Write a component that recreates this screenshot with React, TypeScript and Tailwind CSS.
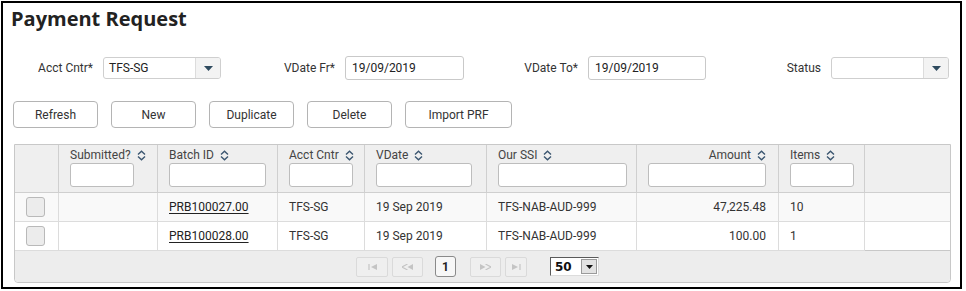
import React from "react";

const font = "[font-family:Roboto,'Liberation_Sans',sans-serif]";

const cols = [
  { key: "sub", label: "Submitted?", input: "w-[64px]" },
  { key: "batch", label: "Batch ID", input: "w-[97px]" },
  { key: "acct", label: "Acct Cntr", input: "w-[64px]" },
  { key: "vdate", label: "VDate", input: "w-[96px]" },
  { key: "ssi", label: "Our SSI", input: "w-[129px]" },
  { key: "amt", label: "Amount", input: "w-[118px]", right: true },
  { key: "items", label: "Items", input: "w-[64px]" },
];

const rows = [
  { batch: "PRB100027.00", acct: "TFS-SG", vdate: "19 Sep 2019", ssi: "TFS-NAB-AUD-999", amt: "47,225.48", items: "10" },
  { batch: "PRB100028.00", acct: "TFS-SG", vdate: "19 Sep 2019", ssi: "TFS-NAB-AUD-999", amt: "100.00", items: "1" },
];

const gridCols = "grid-cols-[44px_99px_120px_87px_122px_150px_142px_86px_85px]";

function SortIcon() {
  return (
    <svg width="9" height="11" viewBox="0 0 9 11" className="ml-[6px] shrink-0">
      <path d="M1 4.5 L4.5 1.2 L8 4.5" fill="none" stroke="#3b5670" strokeWidth="1.4" />
      <path d="M1 6.5 L4.5 9.8 L8 6.5" fill="none" stroke="#3b5670" strokeWidth="1.4" />
    </svg>
  );
}

function Caret() {
  return (
    <svg width="9" height="5" viewBox="0 0 9 5">
      <path d="M0 0 H9 L4.5 5 Z" fill="#2e4a5e" />
    </svg>
  );
}

function Select({ value }: { value?: string }) {
  return (
    <div className="ml-[10px] flex h-[22px] w-[118px] overflow-hidden rounded-[3px] border border-[#cfcfcf] bg-white">
      <div className="flex flex-1 items-center pl-[5px] text-[12px] text-[#222]">{value}</div>
      <div className="flex w-[25px] items-center justify-center border-l border-[#dcdcdc] bg-[#f3f3f3]">
        <Caret />
      </div>
    </div>
  );
}

function DateInput({ value, w }: { value: string; w: string }) {
  return (
    <div className={`ml-[10px] flex h-[24px] ${w} items-center rounded-[3px] border border-[#c9c9c9] bg-white pl-[6px] text-[12px] text-[#222]`}>
      {value}
    </div>
  );
}

function PagerBtn({ w, children }: { w: string; children: React.ReactNode }) {
  return (
    <div className={`flex h-[20px] ${w} items-center justify-center rounded-[2px] border border-[#dadada] bg-[#efefef]`}>
      {children}
    </div>
  );
}

export default function App() {
  return (
    <div className={`h-[291px] w-[966px] bg-white pl-px pt-px text-[#333] ${font}`}>
      <div className="h-[288px] w-[961px] border-2 border-black">
        <h1 className="pl-[8px] pt-[4px] text-[20px] font-bold leading-[24px] text-[#222] [font-family:'Open_Sans',Roboto,sans-serif]">
          Payment Request
        </h1>

        {/* filters */}
        <div className="mt-[25px] flex h-[24px] items-center pl-[10px] text-[12px]">
          <span className="w-[80px] text-right">Acct Cntr*</span>
          <Select value="TFS-SG" />
          <span className="w-[114px] text-right">VDate Fr*</span>
          <DateInput value="19/09/2019" w="w-[119px]" />
          <span className="w-[114px] text-right">VDate To*</span>
          <DateInput value="19/09/2019" w="w-[118px]" />
          <span className="w-[115px] text-right">Status</span>
          <Select />
        </div>

        {/* actions */}
        <div className="mt-[21px] flex gap-[13px] pl-[10px]">
          {["Refresh", "New", "Duplicate", "Delete", "Import PRF"].map((b) => (
            <button
              key={b}
              className={`h-[27px] ${b === "Import PRF" ? "w-[107px]" : "w-[85px]"} rounded-[4px] border border-[#b4b4b4] bg-white text-[12px] text-[#333]`}
            >
              {b}
            </button>
          ))}
        </div>

        {/* grid */}
        <div className="ml-[11px] mt-[16px] w-[937px] rounded-b-[4px] border border-[#c8c8c8] text-[12px]">
          <div className={`grid ${gridCols} bg-[#efefef]`}>
            <div className="h-[48px] border-b border-r border-[#cfcfcf]" />
            {cols.map((c) => (
              <div
                key={c.key}
                className={`flex h-[48px] flex-col border-b border-r border-[#cfcfcf] pt-[3px] ${c.right ? "items-end pr-[12px]" : "items-start pl-[11px]"}`}
              >
                <div className="flex h-[14px] items-center leading-[14px] text-[#444]">
                  {c.label}
                  <SortIcon />
                </div>
                <div className={`mt-[1px] h-[24px] ${c.input} rounded-[3px] border border-[#bdbdbd] bg-white`} />
              </div>
            ))}
            <div className="h-[48px] border-b border-[#cfcfcf]" />
          </div>

          {rows.map((r, i) => (
            <div key={r.batch} className={`grid ${gridCols} ${i === 0 ? "bg-[#f9f9f9]" : "bg-white"}`}>
              <div className="flex h-[29px] items-center border-b border-r border-[#dcdcdc] pl-[11px]">
                <div className="h-[20px] w-[19px] rounded-[3px] border border-[#b9b9b9] bg-[#ececec]" />
              </div>
              <div className="h-[29px] border-b border-r border-[#dcdcdc]" />
              <div className="flex h-[29px] items-center border-b border-r border-[#dcdcdc] pl-[11px]">
                <a className="text-[#222] underline underline-offset-2">{r.batch}</a>
              </div>
              <div className="flex h-[29px] items-center border-b border-r border-[#dcdcdc] pl-[11px]">{r.acct}</div>
              <div className="flex h-[29px] items-center border-b border-r border-[#dcdcdc] pl-[11px]">{r.vdate}</div>
              <div className="flex h-[29px] items-center border-b border-r border-[#dcdcdc] pl-[11px]">{r.ssi}</div>
              <div className="flex h-[29px] items-center justify-end border-b border-r border-[#dcdcdc] pr-[12px]">{r.amt}</div>
              <div className="flex h-[29px] items-center border-b border-r border-[#dcdcdc] pl-[11px]">{r.items}</div>
              <div className={`h-[29px] ${i === 0 ? "border-b border-[#dcdcdc]" : "border-b border-[#c8c8c8]"}`} />
            </div>
          ))}

          {/* pager */}
          <div className="flex h-[31px] items-center rounded-b-[4px] bg-[#ededed] pl-[341px]">
            <PagerBtn w="w-[32px]">
              <svg width="9" height="6" viewBox="0 0 9 6"><path d="M1 0 V6" stroke="#c4c4c4" strokeWidth="1.2" /><path d="M9 0 V6 L3 3 Z" fill="#c4c4c4" /></svg>
            </PagerBtn>
            <div className="ml-[4px]">
              <PagerBtn w="w-[31px]">
                <svg width="11" height="6" viewBox="0 0 11 6"><path d="M5.5 0 L0 3 L5.5 6" fill="none" stroke="#c4c4c4" strokeWidth="1.1" /><path d="M11 0 V6 L5.5 3 Z" fill="#c4c4c4" /></svg>
              </PagerBtn>
            </div>
            <div className="ml-[12px] flex h-[21px] w-[21px] items-center justify-center rounded-[3px] border border-[#8a8a8a] bg-[#f7f7f7] text-[12px] font-bold text-[#222]">
              1
            </div>
            <div className="ml-[14px]">
              <PagerBtn w="w-[31px]">
                <svg width="11" height="6" viewBox="0 0 11 6"><path d="M0 0 V6 L5.5 3 Z" fill="#c4c4c4" /><path d="M5.5 0 L11 3 L5.5 6" fill="none" stroke="#c4c4c4" strokeWidth="1.1" /></svg>
              </PagerBtn>
            </div>
            <div className="ml-[4px]">
              <PagerBtn w="w-[22px]">
                <svg width="9" height="6" viewBox="0 0 9 6"><path d="M0 0 V6 L6 3 Z" fill="#c4c4c4" /><path d="M8 0 V6" stroke="#c4c4c4" strokeWidth="1.2" /></svg>
              </PagerBtn>
            </div>
            <div className="ml-[23px] flex h-[19px] w-[49px] border border-b-[#dcdcdc] border-l-[#5a5a5a] border-r-[#dcdcdc] border-t-[#5a5a5a] bg-white">
              <div className="flex flex-1 items-center pl-[4px] text-[12px] font-bold text-[#111] [font-family:'DejaVu_Sans',sans-serif]">50</div>
              <div className="m-px flex w-[16px] items-center justify-center border border-[#9a9a9a] bg-[#e2e2e2]">
                <svg width="7" height="4" viewBox="0 0 7 4"><path d="M0 0 H7 L3.5 4 Z" fill="#111" /></svg>
              </div>
            </div>
          </div>
        </div>
      </div>
    </div>
  );
}
